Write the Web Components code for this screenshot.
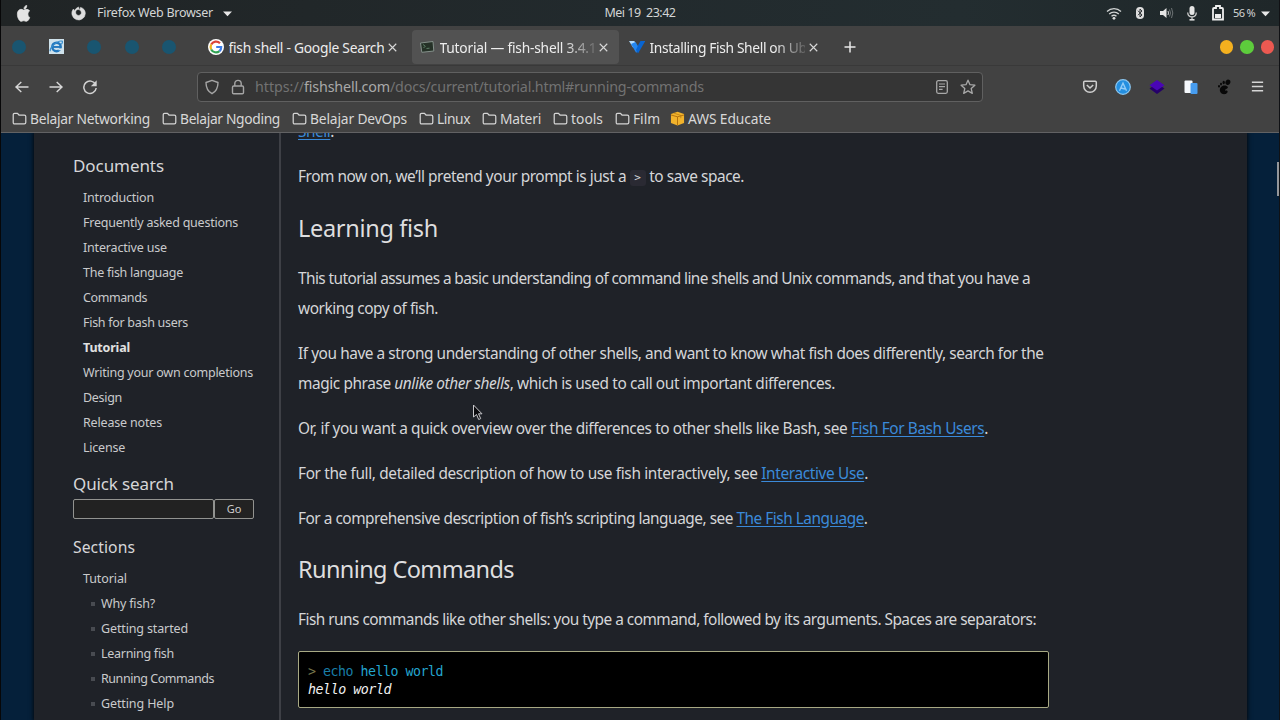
<!DOCTYPE html>
<html lang="en">
<head>
  <meta charset="utf-8">
  <title>Tutorial — fish-shell 3.4.1 documentation</title>
  <style>
    body {
      margin: 0;
      width: 1280px;
      height: 720px;
      overflow: hidden;
      background: #05080c;
      font-family: "Noto Sans", "Open Sans", sans-serif;
    }
  </style>
</head>
<body>
  <desktop-screen></desktop-screen>

  <script>
    // Small helper so every component attaches its root the same way
    class BaseElement extends HTMLElement {
      connectedCallback() {
        if (this.shadowRoot) return;
        this.attachShadow({ mode: 'open' });
        this.shadowRoot.innerHTML = this.template();
      }
    }

    const icons = {
      apple: '<path d="M11.2 8.4c0-1.8 1.5-2.7 1.6-2.8-.9-1.3-2.2-1.400-2.700-1.500-1.100-.1-2.200.7-2.800.7-.6 0-1.500-.7-2.400-.7C3.600 4.100 1.300 5 1.300 8.900c0 3 2 6.500 3.600 6.500.9 0 1.300-.6 2.400-.6s1.400.6 2.400.6c1.500 0 2.800-2.300 3.200-3.700-1.100-.5-1.700-1.700-1.700-3.300zM9.300 3c.6-.7.9-1.600.8-2.600-.9.1-2.600 1-2.600 3.300.7.1 1.300-.2 1.800-.7z" fill="#e4e4e4" stroke="#e4e4e4" stroke-width=".7"/>',
      firefox: '<path d="M8 1 9 4C5.500 3 4.500 6 5.200 8a3 3 0 0 0 5.700 0c.5-2-.7-3-1.500-3.500L10 1.500c3 .5 5.300 3 5.300 6.500A7.200 7.200 0 1 1 2.500 3.200L3.500 5C5 3 6 2 8 1z" fill="#dedede" stroke="#dedede" stroke-width=".6"/>',
      caret: '<path d="M2.500 5.500h11L8 11.500z" fill="#e8e8e8"/>',
      wifi: '<g fill="none" stroke="#d0d3d3" stroke-width="1.300"><path d="M1 6.500a10 10 0 0 1 14 0M3.200 9a7 7 0 0 1 9.600 0M5.500 11.300a3.800 3.800 0 0 1 5 0"/></g><circle cx="8" cy="13.300" r="1.400" fill="#ddd"/>',
      bluetooth: '<rect x="4" y="2" width="8" height="12" rx="3.800" fill="#ddd"/><path d="M6 5.700 10 10 8 12V4l2 2-4 4.200" fill="none" stroke="#303538"/>',
      sound: '<path d="M2 6h3l3.500-3v10L5 10H2z" fill="#e4e4e4"/><path d="M10 6q1 2 0 4" fill="none" stroke="#ccc"/><path d="M11.500 4.500q2 3.500 0 7M13.500 3q2.600 5 0 10" fill="none" stroke="#6d7375"/>',
      mic: '<rect x="5.500" y="1" width="5" height="9" rx="2.500" fill="#e4e4e4"/><path d="M3.700 7.500c.3 5.800 8.300 5.800 8.600 0M8 12v3" fill="none" stroke="#ccc" stroke-width="1.300"/><path d="M5.500 14h5v1.600h-5z" fill="#ddd"/>',
      battery: '<path d="M4 3h2V1h4v2h2a1 1 0 0 1 1 1v10.500H3V4a1 1 0 0 1 1-1z" fill="none" stroke="#eee" stroke-width="1.800"/><path d="M5 9h6v4H5z" fill="#eee"/>',
      ie: '<path fill="#cfe2ec" d="M0 0h16v16H0z"/><circle cx="8" cy="8.500" r="4.500" fill="none" stroke="#2277bd" stroke-width="2.600"/><path d="M4 8.500h8" stroke="#2277bd" stroke-width="2"/><path d="M1.500 13C0 10 9 1 14 2.300q1 1-.8 3.400" fill="none" stroke="#388fcf" stroke-width="1.300"/><path d="M10 10h6v2h-6z" fill="#cfe2ec"/>',
      google: '<circle cx="8" cy="8" r="8" fill="#fff"/><g fill="none" stroke-width="2.200"><path d="M12 4.300A5.400 5.400 0 0 0 3.200 5.600" stroke="#dc4437"/><path d="M3.200 5.600a5.400 5.400 0 0 0 0 4.800" stroke="#eeb41d"/><path d="M3.200 10.400a5.400 5.400 0 0 0 8.300 1.700" stroke="#31a354"/><path d="M11.500 12.100Q13.300 10.500 13.200 8H8.200" stroke="#3d7ce6"/></g>',
      terminal: '<path d="M1.500 4 14 2.500l.8 9.500-12 1.300z" fill="#253127" stroke="#84908a"/><path d="m4 5.500 2.300 1.700L4.500 9M7.500 9.500l3-.3" fill="none" stroke="#6a9174" stroke-width=".8"/>',
      vultr: '<path d="M0 2h5.300l1.500 2.500L4.300 9z" fill="#b2ddff"/><path d="m2 5 4.500-2 3 5-2.200 6z" fill="#2487f0"/><path d="M9.500 5.500 11.500 2h4.800L9 14.500 7 11z" fill="#0864d1"/>',
      close: '<path d="m4 4 8 8m0-8-8 8" stroke="#d8d8d8" stroke-width="1.200"/>',
      plus: '<path d="M8 2.500v11M2.500 8h11" stroke="#e7e7e7" stroke-width="1.500"/>',
      back: '<path d="M14.500 8H2m5.300-5L2 8l5.300 5" fill="none" stroke="#d8d8d8" stroke-width="1.400"/>',
      forward: '<path d="M1.500 8H14M8.700 3 14 8l-5.300 5" fill="none" stroke="#d8d8d8" stroke-width="1.400"/>',
      reload: '<path d="M13.600 5.500A6.200 6.200 0 1 0 14.200 9" fill="none" stroke="#d2d2d2" stroke-width="1.500"/><path d="M14.700 1.200v6H8.900z" fill="#d2d2d2"/>',
      shield: '<path d="M8 1.300 14 3.500c0 5-1.300 8.700-6 11.200C3.300 12.200 2 8.500 2 3.500z" fill="none" stroke="#a5a5a5" stroke-width="1.400" stroke-linejoin="round"/>',
      lock: '<rect x="2.500" y="7" width="11" height="7.800" rx="1.200" fill="none" stroke="#a5a5a5" stroke-width="1.400"/><path d="M4.800 7V4.600a3.200 3.200 0 0 1 6.400 0V7" fill="none" stroke="#a5a5a5" stroke-width="1.400"/>',
      reader: '<rect x="2.700" y="1.700" width="10.600" height="12.600" rx="1.500" fill="none" stroke="#a8a8a8" stroke-width="1.300"/><path d="M5 5h6M5 7.700h6M5 10.400h3.600" stroke="#a8a8a8" stroke-width="1.200"/>',
      star: '<path d="m8 1.200 2 4.500 4.900.5-3.700 3.300 1.100 4.900L8 11.900l-4.300 2.500 1.100-4.900L1.100 6.200 6 5.700z" fill="none" stroke="#a8a8a8" stroke-width="1.300" stroke-linejoin="round"/>',
      pocket: '<path d="M1.700 3.200q0-1 1-1h10.600q1 0 1 1V7a6.300 6.300 0 0 1-12.600 0z" fill="none" stroke="#cfcfcf" stroke-width="1.500"/><path d="m4.800 6 3.200 3 3.200-3" fill="none" stroke="#cfcfcf" stroke-width="1.600"/>',
      aext: '<circle cx="8" cy="8" r="7.300" fill="#248fe0" stroke="#8cc6ef" stroke-width="1.200"/><path d="M4.500 11.700 8 4.200l3.500 7.500M6 9l4 1" fill="none" stroke="#93ccf7" stroke-width="1.400"/>',
      layers: '<path d="m8 4.500 7.500 5L8 15 .5 9.500z" fill="#250069"/><path d="m8 1 7.500 5.300L8 11.500.5 6.300z" fill="#4905b6"/>',
      translate: '<rect x="1.500" y="1.500" width="8" height="12.500" rx="1" fill="#f5f8fc"/><rect x="7.500" y="4" width="7" height="11" rx="1" fill="#479df0"/>',
      gnome: '<g fill="#080808"><ellipse cx="12" cy="3.200" rx="2.400" ry="2.700" transform="rotate(25 12 3)"/><ellipse cx="7.700" cy="3.500" rx="1.200" ry="1.700"/><ellipse cx="5" cy="5.100" rx="1" ry="1.400"/><ellipse cx="3" cy="7.200" rx="1" ry="1.200"/><path d="M10.500 7C7 5.500 3 8.700 4 12.200c.8 2.900 5 4 7 1.800 1.800-2-.4-3.100-2-2.300-.4-2 3.500-1.700 2.800-4z"/></g>',
      menu: '<path d="M2 3.500h12M2 8h12M2 12.500h12" stroke="#d5d5d5" stroke-width="1.500"/>',
      folder: '<path d="M1.300 4q0-1.500 1.500-1.500h3L7.500 4.300h5.700q1.500 0 1.500 1.500v6.500q0 1.500-1.500 1.500H2.800q-1.500 0-1.500-1.500z" fill="none" stroke="#d5d5d5" stroke-width="1.300"/>',
      aws: '<path d="m8 .8 7 2.500v9.500L8 15.500l-7-2.700V3.300z" fill="#f2b32c"/><path d="m1 4.200 7 2 7-2M8 6.200v9" fill="none" stroke="#b06f0d"/><path d="m4 2.200 7.500 2.500v3" fill="none" stroke="#b77c13" stroke-width=".8"/>'
    };

    class SvgIcon extends BaseElement {
      template() {
        const size = this.getAttribute('size') || 16;
        return `
          <style>
            :host { display: block; flex: none; width: ${size}px; height: ${size}px; }
            svg { display: block; }
          </style>
          <svg width="${size}" height="${size}" viewBox="0 0 16 16">${icons[this.getAttribute('name')]}</svg>`;
      }
    }

    // Single line of text, tracked in or out to the width in its attribute
    class FitText extends BaseElement {
      template() {
        return `
          <style>
            :host { display: inline-block; width: ${this.getAttribute('width')}px; }
            span { display: inline-block; white-space: pre; }
          </style>
          <span><slot></slot></span>`;
      }

      connectedCallback() {
        super.connectedCallback();
        const span = this.shadowRoot.querySelector('span');
        const target = Number(this.getAttribute('width'));
        const count = this.textContent.length;
        let spacing = 0;
        for (let i = 0; i < 3; i++) {
          spacing += (target - span.getBoundingClientRect().width) / count;
          span.style.letterSpacing = spacing + 'px';
        }
      }
    }

    class SystemBar extends BaseElement {
      template() {
        return `
          <style>
            :host { display: grid; grid-template-columns: 1fr auto 1fr; align-items: center; height: 26px;
              background: linear-gradient(90deg, #202425, #222a2d 48%, #232d30 75%, #1f2729);
              color: #d3d5d5; font-size: 12.5px; line-height: 26px; }
            div { display: flex; align-items: center; }
            .left { padding-left: 15px; }
            .left svg-icon:nth-child(2) { margin: 0 11px 0 38px; }
            .left svg-icon:nth-child(4) { margin-left: 8px; }
            .right { justify-content: flex-end; padding-right: 7px; }
            .right svg-icon { margin-left: 10px; }
            .right fit-text { margin-left: 7px; font-size: 11px; }
            .right svg-icon.caret { margin-left: 4px; }
          </style>
          <div class="left">
            <svg-icon name="apple" size="17"></svg-icon>
            <svg-icon name="firefox" size="15"></svg-icon>
            <fit-text width="116">Firefox Web Browser</fit-text>
            <svg-icon name="caret" size="13"></svg-icon>
          </div>
          <fit-text width="71">Mei 19  23:42</fit-text>
          <div class="right">
            <svg-icon name="wifi"></svg-icon>
            <svg-icon name="bluetooth"></svg-icon>
            <svg-icon name="sound"></svg-icon>
            <svg-icon name="mic"></svg-icon>
            <svg-icon name="battery"></svg-icon>
            <fit-text width="22">56 %</fit-text>
            <svg-icon class="caret" name="caret" size="13"></svg-icon>
          </div>`;
      }
    }

    class BrowserTab extends BaseElement {
      template() {
        return `
          <style>
            :host { display: flex; align-items: center; box-sizing: border-box; width: 207px; height: 34px;
              padding: 0 8px 0 7px; border-radius: 4px; color: #ededed; font-size: 13.8px; line-height: 34px; }
            :host([active]) { background: #525252; }
            .label { width: 157px; margin-left: 5px; padding-top: 2px; overflow: hidden; white-space: nowrap; }
            :host([fade]) .label { -webkit-mask: linear-gradient(90deg, #000 80%, transparent 104%); mask: linear-gradient(90deg, #000 80%, transparent 104%); }
            .close { margin: 1px 0 0 1px; }
          </style>
          <svg-icon name="${this.getAttribute('icon')}" size="16"></svg-icon>
          <div class="label"><slot></slot></div>
          <svg-icon class="close" name="close" size="15"></svg-icon>`;
      }
    }

    class TabStrip extends BaseElement {
      template() {
        return `
          <style>
            :host { display: flex; align-items: center; height: 40px; padding: 2px 6px 0 10px; box-sizing: border-box;
              border-bottom: 1px solid #393939; background: #424242; }
            .pin { display: flex; justify-content: center; width: 16px; margin-right: 21.500px; }
            .dot { width: 14px; height: 14px; border-radius: 50%; background: #195570; filter: blur(.7px); }
            .tabs { display: flex; margin-left: 2px; gap: 4px; }
            .tabs browser-tab:nth-child(3) { margin-left: -1px; }
            .new { margin: 1px 0 0 13px; }
            .controls { display: flex; gap: 7px; margin: 1px -1px 0 auto; }
            .controls i { width: 13.500px; height: 13.500px; border-radius: 50%; background: #f4b01f; }
            .controls i:nth-child(2) { background: #5dcc3c; }
            .controls i:nth-child(3) { background: #ec5951; }
          </style>
          <div class="pin"><div class="dot"></div></div>
          <div class="pin"><svg-icon name="ie" size="15"></svg-icon></div>
          <div class="pin"><div class="dot"></div></div>
          <div class="pin"><div class="dot"></div></div>
          <div class="pin"><div class="dot"></div></div>
          <div class="tabs">
            <browser-tab icon="google"><fit-text width="156">fish shell - Google Search</fit-text></browser-tab>
            <browser-tab icon="terminal" active fade><fit-text width="157">Tutorial — fish-shell 3.4.1</fit-text></browser-tab>
            <browser-tab icon="vultr" fade><fit-text width="157">Installing Fish Shell on Ub</fit-text></browser-tab>
          </div>
          <svg-icon class="new" name="plus"></svg-icon>
          <div class="controls"><i></i><i></i><i></i></div>`;
      }
    }

    class NavToolbar extends BaseElement {
      template() {
        return `
          <style>
            :host { display: flex; align-items: center; height: 41px; padding: 0 14px 0 13px; background: #424242; }
            .nav { display: flex; gap: 18px; width: 183px; }
            .url { display: flex; align-items: center; box-sizing: border-box; width: 786px; height: 30px; padding: 0 6px;
              border: 1px solid #606060; border-radius: 4px; background: #353535; color: #727272; font-size: 14.300px; line-height: 28px; }
            .url svg-icon + svg-icon { margin: 0 9px 0 10px; }
            .url b { font-weight: 400; color: #a9a9a9; }
            .url .end { display: flex; gap: 10px; margin-left: auto; }
            .url .end svg-icon { margin: 0; }
            .ext { display: flex; gap: 17.700px; margin-left: auto; }
          </style>
          <div class="nav">
            <svg-icon name="back"></svg-icon>
            <svg-icon name="forward"></svg-icon>
            <svg-icon name="reload"></svg-icon>
          </div>
          <div class="url">
            <svg-icon name="shield"></svg-icon>
            <svg-icon name="lock"></svg-icon>
            <fit-text width="49">https://</fit-text><b><fit-text width="86">fishshell.com</fit-text></b><fit-text width="314">/docs/current/tutorial.html#running-commands</fit-text>
            <div class="end"><svg-icon name="reader"></svg-icon><svg-icon name="star"></svg-icon></div>
          </div>
          <div class="ext">
            <svg-icon name="pocket"></svg-icon>
            <svg-icon name="aext"></svg-icon>
            <svg-icon name="layers"></svg-icon>
            <svg-icon name="translate"></svg-icon>
            <svg-icon name="gnome"></svg-icon>
            <svg-icon name="menu" size="15"></svg-icon>
          </div>`;
      }
    }

    class BookmarkItem extends BaseElement {
      template() {
        return `
          <style>
            :host { display: flex; align-items: center; gap: 3px; }
          </style>
          <svg-icon name="${this.getAttribute('icon') || 'folder'}" size="15"></svg-icon>
          <slot></slot>`;
      }
    }

    class BookmarksBar extends BaseElement {
      template() {
        const items = [
          ['Belajar Networking', 120], ['Belajar Ngoding', 100], ['Belajar DevOps', 97],
          ['Linux', 33], ['Materi', 41], ['tools', 32], ['Film', 27]
        ];
        return `
          <style>
            :host { display: flex; align-items: center; gap: 12px; box-sizing: border-box; height: 26px; padding: 0 11px 2px;
              border-bottom: 1px solid #626264; background: #424242; color: #d8d8d8; font-size: 13.800px; line-height: 23px; }
            [icon] { margin-left: -2px; }
          </style>
          ${items.map(([label, width]) => `<bookmark-item><fit-text width="${width}">${label}</fit-text></bookmark-item>`).join('')}
          <bookmark-item icon="aws"><fit-text width="83">AWS Educate</fit-text></bookmark-item>`;
      }
    }

    class DocsSidebar extends BaseElement {
      template() {
        const docs = [
          ['Introduction', 71], ['Frequently asked questions', 155], ['Interactive use', 84], ['The fish language', 100],
          ['Commands', 64], ['Fish for bash users', 105], ['Tutorial', 47], ['Writing your own completions', 170],
          ['Design', 39], ['Release notes', 79], ['License', 42]
        ];
        const sections = [
          ['Why fish?', 54], ['Getting started', 87], ['Learning fish', 73], ['Running Commands', 113], ['Getting Help', 73]
        ];
        const item = ([label, width]) => `<li class="${label === 'Tutorial' && width === 47 ? 'current' : ''}"><fit-text width="${width}">${label}</fit-text></li>`;
        return `
          <style>
            :host { display: block; box-sizing: border-box; flex: none; width: 247px; padding: 17px 0 0 39px;
              border-right: 2px solid #3e4046; color: #c9cacc; font-size: 12.500px; }
            h3 { margin: 0; font-size: 17px; font-weight: 400; line-height: 32px; color: #d6d6d8; }
            ul { margin: 3px 0 0; padding: 0 0 0 10px; list-style: none; }
            li { height: 25px; line-height: 25px; }
            .current { font-weight: 700; color: #e0e0e0; }
            form { display: flex; margin: -1px 0 12px; }
            input { box-sizing: border-box; width: 141px; height: 20px; border: 1px solid #929390; border-radius: 2px; background: #222; padding: 0; }
            button { width: 40px; height: 20px; border: 1px solid #929390; border-radius: 2px; background: #222; color: #ccc; font: 11px/16px "Noto Sans", sans-serif; padding: 0; }
            .search { margin-top: 8px; }
            .sections { font-size: 15.700px; }
            .sub { margin: 0; padding-left: 8px; }
            .sub li { display: flex; align-items: center; gap: 6px; }
            .sub li::before { content: ''; width: 4px; height: 4px; background: #484b51; }
          </style>
          <h3><fit-text width="91">Documents</fit-text></h3>
          <ul>${docs.map(item).join('')}</ul>
          <h3 class="search"><fit-text width="101">Quick search</fit-text></h3>
          <form><input type="text" aria-label="Quick search"><button type="button">Go</button></form>
          <h3 class="sections"><fit-text width="62">Sections</fit-text></h3>
          <ul>
            ${item(['Tutorial', 44])}
            <ul class="sub">${sections.map(item).join('')}</ul>
          </ul>`;
      }
    }

    class CodeBlock extends BaseElement {
      template() {
        return `
          <style>
            :host { display: block; box-sizing: border-box; width: 751px; height: 57px; padding: 11px 9px 8px; border: 1px solid #a8a984;
              border-radius: 2px; background: #000; color: #f2f2f2; font: 13.300px/18px "DejaVu Sans Mono", monospace; }
          </style>
          <slot></slot>`;
      }
    }

    class DocsArticle extends BaseElement {
      template() {
        return `
          <style>
            :host { display: block; margin-top: -16px; padding-left: 17px; color: #d5d6d8; font-size: 15.400px; line-height: 30px; }
            p { margin: 0 0 15px; }
            fit-text { display: block; }
            a { color: #3b8ad9; text-decoration: underline; text-underline-offset: 2px; }
            h2 { margin: 0 0 18px; padding-top: 3px; font-size: 23.500px; font-weight: 400; line-height: 36px; color: #dededf; }
            h2.second { padding-top: 2px; }
            code { display: inline-block; width: 16px; height: 16px; line-height: 15px; text-align: center; border-radius: 3px;
              background: #2a2a33; font-family: "DejaVu Sans Mono", monospace; font-size: 11px; letter-spacing: 0; vertical-align: 1px; }
            code-block { margin-top: 16px; }
            code-block div { height: 18px; }
            .prompt { color: #77764b; }
            .cmd { color: #197ea8; }
            .param { color: #23a5cf; }
          </style>
          <p><fit-text width="36"><a>Shell</a>.</fit-text></p>
          <p><fit-text width="446">From now on, we’ll pretend your prompt is just a <code>&gt;</code> to save space.</fit-text></p>
          <h2><fit-text width="140">Learning fish</fit-text></h2>
          <p>
            <fit-text width="732">This tutorial assumes a basic understanding of command line shells and Unix commands, and that you have a</fit-text>
            <fit-text width="140">working copy of fish.</fit-text>
          </p>
          <p>
            <fit-text width="745.5">If you have a strong understanding of other shells, and want to know what fish does differently, search for the</fit-text>
            <fit-text width="537">magic phrase <em>unlike other shells</em>, which is used to call out important differences.</fit-text>
          </p>
          <p><fit-text width="690">Or, if you want a quick overview over the differences to other shells like Bash, see <a>Fish For Bash Users</a>.</fit-text></p>
          <p><fit-text width="570">For the full, detailed description of how to use fish interactively, see <a>Interactive Use</a>.</fit-text></p>
          <p><fit-text width="569.5">For a comprehensive description of fish’s scripting language, see <a>The Fish Language</a>.</fit-text></p>
          <h2 class="second"><fit-text width="216">Running Commands</fit-text></h2>
          <p><fit-text width="738">Fish runs commands like other shells: you type a command, followed by its arguments. Spaces are separators:</fit-text></p>
          <code-block>
            <div><fit-text width="135"><span class="prompt">&gt;</span> <span class="cmd">echo</span> <span class="param">hello world</span></fit-text></div>
            <div><fit-text width="83"><em>hello world</em></fit-text></div>
          </code-block>`;
      }
    }

    class PageView extends BaseElement {
      template() {
        return `
          <style>
            :host { display: flex; flex: 1; min-height: 0; padding: 0 32px 0 33px; overflow: hidden; position: relative;
              background: #05203a; }
            main { display: flex; flex: 1; background: #1f2228; box-shadow: 0 0 4px 1px #030a12; }
            .thumb { position: absolute; right: 0; top: 29px; width: 2px; height: 34px; background: #94979b; }
            .cursor { position: absolute; left: 471px; top: 271px; }
          </style>
          <main>
            <docs-sidebar></docs-sidebar>
            <docs-article></docs-article>
          </main>
          <div class="thumb"></div>
          <svg class="cursor" width="12" height="18" viewBox="0 0 12 18"><path d="M1.500 1v12l3-2.500 2.200 5 2-.9-2.200-4.800H10z" fill="#0b0b0e" stroke="#c8c8cb"/></svg>`;
      }
    }

    class DesktopScreen extends BaseElement {
      template() {
        return `
          <style>
            :host { display: flex; flex-direction: column; width: 1280px; height: 720px; overflow: hidden; box-sizing: border-box;
              border-left: 1px solid #070708; border-right: 1px solid #101114; }
          </style>
          <system-bar></system-bar>
          <tab-strip></tab-strip>
          <nav-toolbar></nav-toolbar>
          <bookmarks-bar></bookmarks-bar>
          <page-view></page-view>`;
      }
    }

    customElements.define('svg-icon', SvgIcon);
    customElements.define('system-bar', SystemBar);
    customElements.define('browser-tab', BrowserTab);
    customElements.define('tab-strip', TabStrip);
    customElements.define('nav-toolbar', NavToolbar);
    customElements.define('bookmark-item', BookmarkItem);
    customElements.define('bookmarks-bar', BookmarksBar);
    customElements.define('docs-sidebar', DocsSidebar);
    customElements.define('code-block', CodeBlock);
    customElements.define('docs-article', DocsArticle);
    customElements.define('page-view', PageView);
    customElements.define('desktop-screen', DesktopScreen);
    // Measures its own text, so everything around it has to be in place first
    customElements.define('fit-text', FitText);
  </script>
</body>
</html>
